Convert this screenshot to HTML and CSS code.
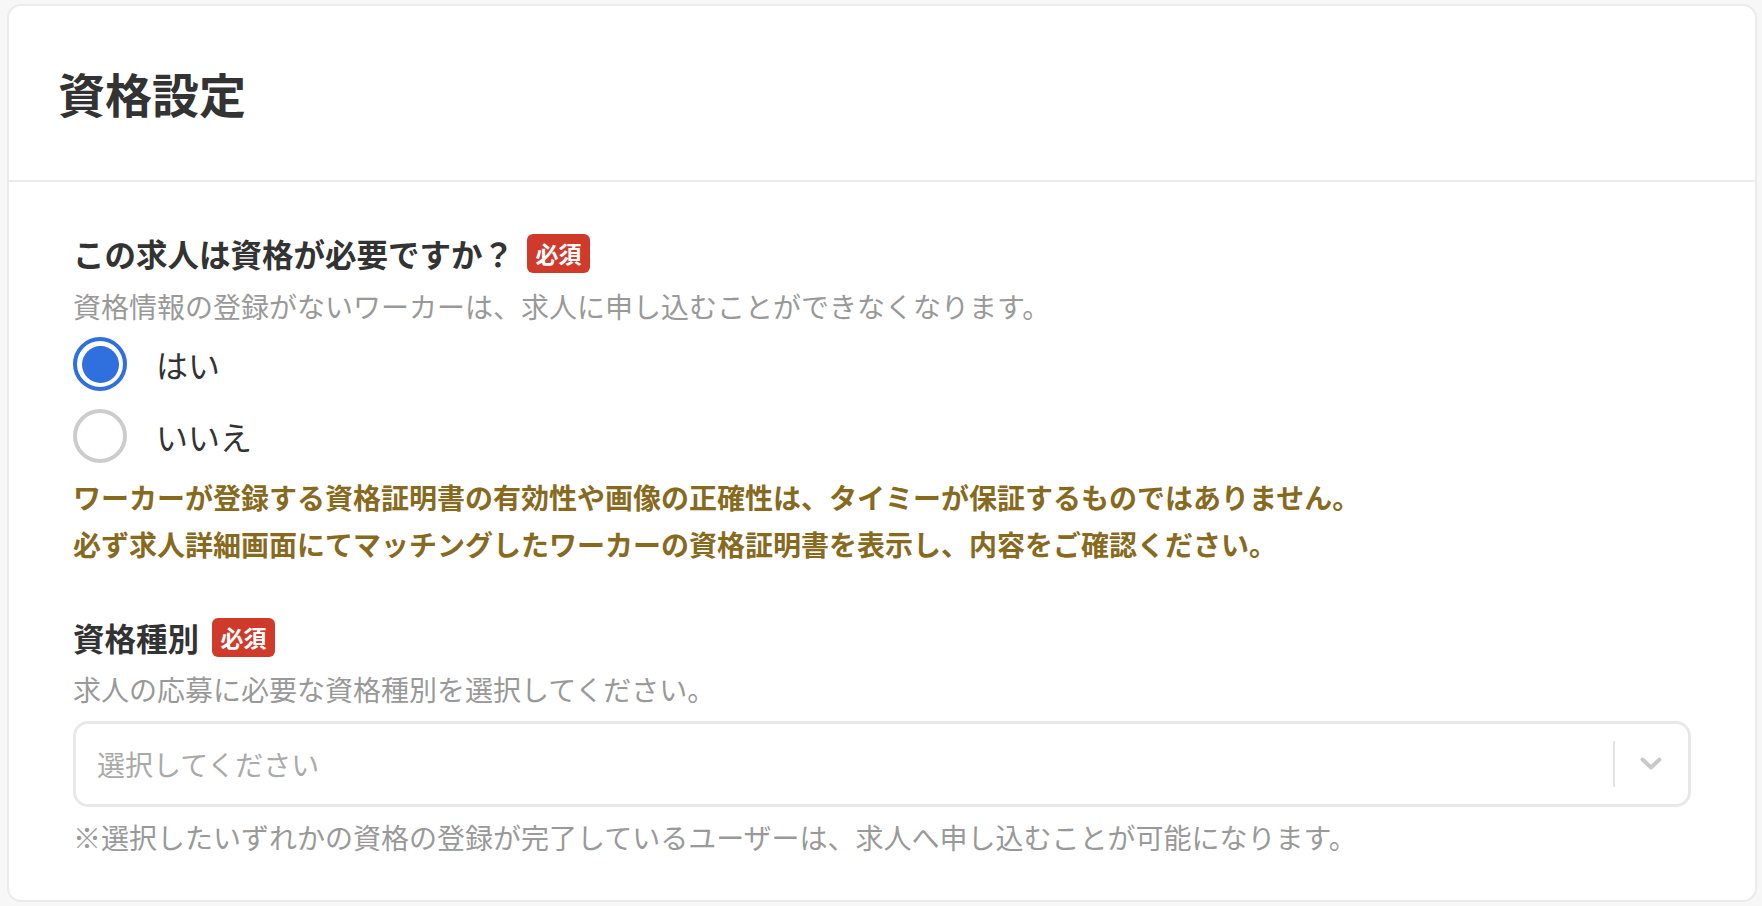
FILE: index.html
```html
<!DOCTYPE html>
<html lang="ja">
<head>
<meta charset="utf-8">
<title>資格設定</title>
<link rel="stylesheet" href="styles.css">
</head>
<body>
<section class="card">
  <header class="card-header">
    <h1 class="card-title">資格設定</h1>
  </header>
  <div class="card-body">
    <div class="field">
      <div class="field-label">
        <span class="label-text">この求人は資格が必要ですか？</span>
        <span class="badge">必須</span>
      </div>
      <p class="field-desc">資格情報の登録がないワーカーは、求人に申し込むことができなくなります。</p>
      <div class="radios">
        <label class="radio">
          <span class="radio-mark checked"></span>
          <span class="radio-text">はい</span>
        </label>
        <label class="radio">
          <span class="radio-mark"></span>
          <span class="radio-text">いいえ</span>
        </label>
      </div>
      <p class="warning">ワーカーが登録する資格証明書の有効性や画像の正確性は、タイミーが保証するものではありません。<br>必ず求人詳細画面にてマッチングしたワーカーの資格証明書を表示し、内容をご確認ください。</p>
    </div>
    <div class="field field-second">
      <div class="field-label">
        <span class="label-text">資格種別</span>
        <span class="badge">必須</span>
      </div>
      <p class="field-desc">求人の応募に必要な資格種別を選択してください。</p>
      <div class="select">
        <span class="select-placeholder">選択してください</span>
        <span class="select-sep"></span>
        <span class="select-indicator">
          <svg width="22" height="14" viewBox="0 0 22 14"><path d="M2.5 2.5 L11 10.5 L19.5 2.5" fill="none" stroke="#c9c9c9" stroke-width="4" stroke-linecap="round" stroke-linejoin="round"/></svg>
        </span>
      </div>
      <p class="field-note">※選択したいずれかの資格の登録が完了しているユーザーは、求人へ申し込むことが可能になります。</p>
    </div>
  </div>
</section>
</body>
</html>
```

FILE: styles.css
```css
* { box-sizing: border-box; }
html, body { margin: 0; padding: 0; }
body {
  background: #f7f7f7;
  padding: 4px 5px 4px 7px;
  font-family: "Noto Sans CJK JP", "Noto Sans", sans-serif;
  color: #333;
}
.card {
  background: #fff;
  border: 2px solid #ebebeb;
  border-radius: 14px;
  height: 898px;
}
.card-header {
  height: 176px;
  display: flex;
  align-items: center;
  padding: 0 49px;
  border-bottom: 2px solid #ebebeb;
}
.card-title {
  margin: 0;
  font-size: 47px;
  font-weight: 700;
  line-height: 60px;
  color: #333;
}
.card-body {
  padding: 51px 64px 0 64px;
}
.field-label {
  display: flex;
  align-items: center;
  height: 40px;
  gap: 13px;
}
.label-text {
  font-size: 31.5px;
  font-weight: 700;
  line-height: 40px;
  color: #333;
}
.badge {
  display: inline-flex;
  align-items: center;
  justify-content: center;
  width: 63px;
  height: 39px;
  background: #cf3a2b;
  color: #fff;
  border-radius: 6px;
  font-size: 23px;
  font-weight: 700;
  line-height: 1;
}
.field-desc {
  margin: 13px 0 0;
  font-size: 28px;
  line-height: 40px;
  color: #999;
}
.radios {
  display: flex;
  flex-direction: column;
  gap: 18px;
  margin-top: 11px;
}
.radio {
  display: flex;
  align-items: center;
  gap: 29px;
  height: 54px;
}
.radio-mark {
  width: 54px;
  height: 54px;
  border-radius: 50%;
  border: 4px solid #cccccc;
  display: flex;
  align-items: center;
  justify-content: center;
  flex: none;
}
.radio-mark.checked {
  border-color: #2f6fde;
}
.radio-mark.checked::after {
  content: "";
  width: 37px;
  height: 37px;
  border-radius: 50%;
  background: #2f6fde;
}
.radio-text {
  font-size: 32px;
  line-height: 44px;
  color: #333;
}
.warning {
  margin: 11px 0 0;
  font-size: 28px;
  font-weight: 700;
  line-height: 47px;
  color: #886a1f;
}
.field-second {
  margin-top: 49px;
}
.field-second .field-desc {
  margin-top: 12px;
}
.select {
  margin-top: 12px;
  height: 86px;
  border: 3px solid #e8e8e8;
  border-radius: 15px;
  display: flex;
  align-items: center;
}
.select-placeholder {
  flex: 1;
  padding-left: 21px;
  font-size: 28px;
  line-height: 40px;
  color: #aaa;
}
.select-sep {
  width: 2px;
  height: 46px;
  background: #e3e3e3;
}
.select-indicator {
  width: 73px;
  display: flex;
  align-items: center;
  justify-content: center;
  padding-right: 2px;
}
.select-indicator svg { display: block; }
.field-note {
  margin: 10px 0 0;
  font-size: 28px;
  line-height: 40px;
  color: #999;
}
```
